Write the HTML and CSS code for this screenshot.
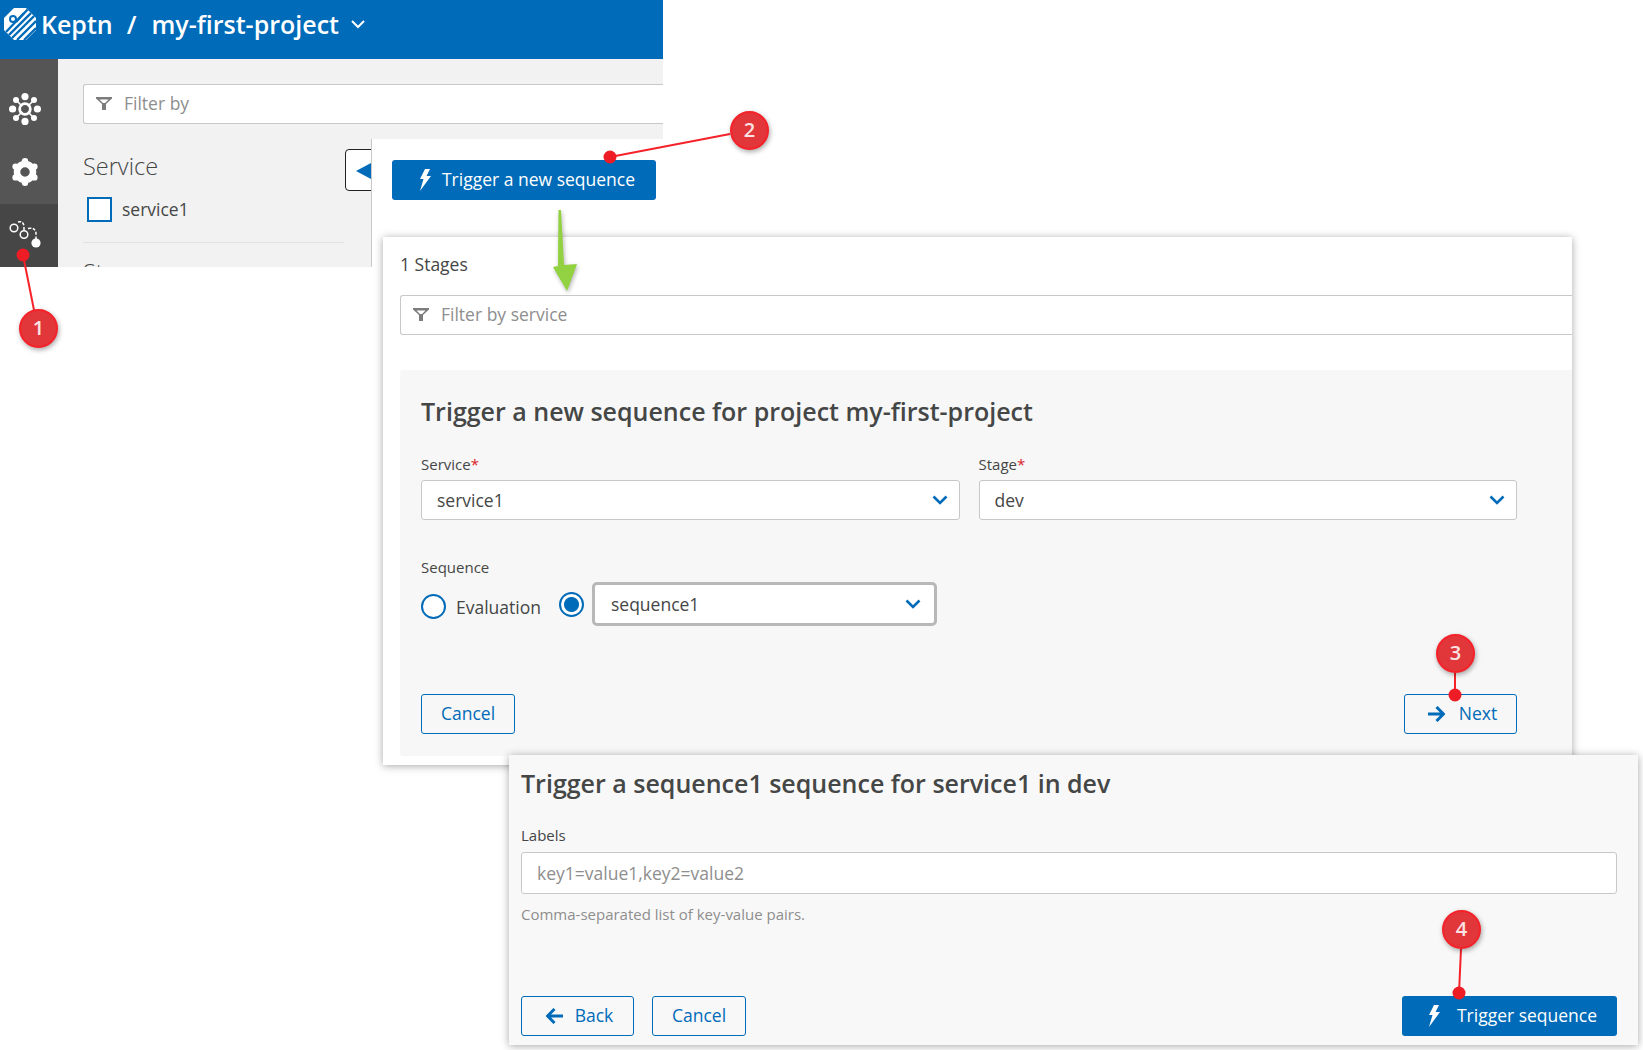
FILE: index.html
```html
<!DOCTYPE html>
<html lang="en">
<head>
    <meta charset="UTF-8">
    <meta name="viewport" content="width=device-width, initial-scale=1.0">
    <title>Keptn - Trigger a new sequence</title>
    <link rel="stylesheet" href="styles.css">
</head>
<body>
    <!-- screenshot 1: project view -->
    <div class="shot shot-project">
        <header class="topbar">
            <svg class="logo" viewBox="0 0 32 32" width="32" height="32">
                <defs><clipPath id="logoShape"><path d="M10 0 L22 0 L32 10 L32 22 L22 32 L10 32 L0 22 L0 10 Z"/></clipPath></defs>
                <g clip-path="url(#logoShape)">
                    <rect width="32" height="32" fill="#fff"/>
                    <g stroke="#006bb8" stroke-width="2.3">
                        <path d="M12 14 L25 0"/>
                        <path d="M0 32 L32 0"/>
                        <path d="M6 32 L32 6"/>
                        <path d="M13 32 L32 13"/>
                        <path d="M20 32 L32 20"/>
                        <path d="M2 24 L20 5"/>
                    </g>
                </g>
                <circle cx="9" cy="11" r="3" fill="none" stroke="#006bb8" stroke-width="2"/>
            </svg>
            <span class="brand">Keptn</span>
            <span class="slash">/</span>
            <span class="project">my-first-project</span>
            <svg class="project-caret" viewBox="0 0 16 10" width="16" height="10"><path d="M2 2 L8 8 L14 2" fill="none" stroke="#fff" stroke-width="2"/></svg>
        </header>
        <div class="project-body">
            <nav class="sidenav">
                <div class="nav-item nav-services">
                    <svg viewBox="0 0 32 32" width="32" height="32" fill="#fff">
                        <circle cx="16" cy="16" r="5.2" fill="none" stroke="#fff" stroke-width="3"/>
                        <path d="M7 7 L25 25 M25 7 L7 25" stroke="#fff" stroke-width="1.6"/>
                        <circle cx="16" cy="16" r="3.7" fill="#555"/>
                        <circle cx="16" cy="3.6" r="3.6"/><circle cx="16" cy="28.4" r="3.6"/>
                        <circle cx="3.6" cy="16" r="3.6"/><circle cx="28.4" cy="16" r="3.6"/>
                        <circle cx="7" cy="7" r="3"/><circle cx="25" cy="7" r="3"/>
                        <circle cx="7" cy="25" r="3"/><circle cx="25" cy="25" r="3"/>
                    </svg>
                </div>
                <div class="nav-item nav-settings">
                    <svg viewBox="0 0 28 28" width="28" height="28">
                        <circle cx="14" cy="14" r="8" fill="none" stroke="#fff" stroke-width="6.5"/>
                        <g fill="#fff">
                            <circle cx="14" cy="3.2" r="3.2"/><circle cx="14" cy="24.8" r="3.2"/>
                            <circle cx="4.6" cy="8.6" r="3.2"/><circle cx="23.4" cy="8.6" r="3.2"/>
                            <circle cx="4.6" cy="19.4" r="3.2"/><circle cx="23.4" cy="19.4" r="3.2"/>
                        </g>
                    </svg>
                </div>
                <div class="nav-item nav-sequences">
                    <svg viewBox="0 0 32 27" width="32" height="27">
                        <g fill="none" stroke="#fff" stroke-width="1.5">
                            <circle cx="5" cy="7" r="3.8"/>
                            <circle cx="15" cy="13.5" r="3.8"/>
                            <path d="M9 1 Q14 -0.5 15 5 L15 9" stroke-dasharray="3 1.6"/>
                            <path d="M19 7.5 Q26 6 27 12 L27 18" stroke-dasharray="3 1.6"/>
                        </g>
                        <circle cx="27" cy="22" r="4.6" fill="#fff"/>
                    </svg>
                </div>
            </nav>
            <div class="project-main">
                <div class="filter filter-project">
                    <svg class="funnel" viewBox="0 0 16 16" width="16" height="16"><path d="M0 2 H16 V3.5 L10 9 V15 H6 V9 L0 3.5 Z M3.5 4.5 L7 8 H9 L12.5 4.5 Z" fill-rule="evenodd"/></svg>
                    <span>Filter by</span>
                </div>
                <div class="facets">
                    <h3 class="facet-title">Service</h3>
                    <label class="facet-option"><span class="checkbox"></span>service1</label>
                    <hr class="facet-rule">
                    <h3 class="facet-title facet-clipped">Stage</h3>
                </div>
            </div>
        </div>
        <div class="collapse-btn"><span class="collapse-arrow"></span></div>
    </div>

    <!-- screenshot 2: sequence view top -->
    <div class="shot shot-sequences">
        <button class="btn btn-primary btn-new">
            <svg class="bolt" viewBox="0 0 12 22" width="12" height="22"><path d="M6 0 L11 0 L7.5 7 L12 7 L1 22 L4.5 10 L1 10 Z" fill="#fff"/></svg>
            Trigger a new sequence
        </button>
    </div>

    <!-- screenshot 3: trigger form -->
    <div class="shot shot-form">
        <p class="stage-count">1 Stages</p>
        <div class="filter filter-service">
            <svg class="funnel" viewBox="0 0 16 16" width="16" height="16"><path d="M0 2 H16 V3.5 L10 9 V15 H6 V9 L0 3.5 Z M3.5 4.5 L7 8 H9 L12.5 4.5 Z" fill-rule="evenodd"/></svg>
            <span>Filter by service</span>
        </div>
        <div class="form-panel">
            <h2 class="form-title">Trigger a new sequence for project my-first-project</h2>
            <div class="form-row">
                <div class="field">
                    <div class="field-label">Service<span class="req">*</span></div>
                    <div class="select"><span>service1</span>
                        <svg viewBox="0 0 16 10" width="16" height="10"><path d="M1.5 1.5 L8 8 L14.5 1.5" fill="none" stroke="#006bb8" stroke-width="2.6"/></svg>
                    </div>
                </div>
                <div class="field">
                    <div class="field-label">Stage<span class="req">*</span></div>
                    <div class="select"><span>dev</span>
                        <svg viewBox="0 0 16 10" width="16" height="10"><path d="M1.5 1.5 L8 8 L14.5 1.5" fill="none" stroke="#006bb8" stroke-width="2.6"/></svg>
                    </div>
                </div>
            </div>
            <div class="field-label label-sequence">Sequence</div>
            <div class="sequence-row">
                <span class="radio"></span>
                <span class="radio-label">Evaluation</span>
                <span class="radio radio-on"></span>
                <div class="select select-focus"><span>sequence1</span>
                    <svg viewBox="0 0 16 10" width="16" height="10"><path d="M1.5 1.5 L8 8 L14.5 1.5" fill="none" stroke="#006bb8" stroke-width="2.6"/></svg>
                </div>
            </div>
            <div class="form-actions">
                <button class="btn btn-outline btn-cancel">Cancel</button>
                <button class="btn btn-outline btn-next">
                    <svg viewBox="0 0 17 16" width="17" height="16"><path d="M0 8 H15 M8.5 1 L15.5 8 L8.5 15" fill="none" stroke="#006bb8" stroke-width="3"/></svg>
                    Next
                </button>
            </div>
        </div>
    </div>

    <!-- screenshot 4: labels step -->
    <div class="shot shot-labels">
        <h2 class="form-title labels-title">Trigger a sequence1 sequence for service1 in dev</h2>
        <div class="field-label">Labels</div>
        <div class="text-input">key1=value1,key2=value2</div>
        <p class="hint">Comma-separated list of key-value pairs.</p>
        <div class="form-actions labels-actions">
            <div class="actions-left">
                <button class="btn btn-outline btn-back">
                    <svg viewBox="0 0 17 16" width="17" height="16"><path d="M17 8 H2 M8.5 1 L1.5 8 L8.5 15" fill="none" stroke="#006bb8" stroke-width="3"/></svg>
                    Back
                </button>
                <button class="btn btn-outline btn-cancel">Cancel</button>
            </div>
            <button class="btn btn-primary btn-trigger">
                <svg class="bolt" viewBox="0 0 12 22" width="12" height="22"><path d="M6 0 L11 0 L7.5 7 L12 7 L1 22 L4.5 10 L1 10 Z" fill="#fff"/></svg>
                Trigger sequence
            </button>
        </div>
    </div>

    <!-- red callouts and green arrow drawn over the screenshots -->
    <svg class="callout-lines" viewBox="0 0 1643 1050" width="1643" height="1050">
        <g stroke="#f5222a" stroke-width="2" fill="none">
            <path d="M23 255 L34 310"/>
            <path d="M610 157 L730 134"/>
            <path d="M1455 695 L1455 673"/>
            <path d="M1459 993 L1461 949"/>
        </g>
        <g fill="#ee1c25">
            <circle cx="23" cy="255" r="6.5"/>
            <circle cx="610" cy="157" r="6.5"/>
            <circle cx="1455" cy="695" r="6.5"/>
            <circle cx="1459" cy="993" r="6.5"/>
        </g>
        <path class="green-arrow" d="M558.5 210 L561 210 L564 265 L577 264 L567 291 L553 267 L558 266 Z"/>
    </svg>
    <div class="badge badge-1">1</div>
    <div class="badge badge-2">2</div>
    <div class="badge badge-3">3</div>
    <div class="badge badge-4">4</div>
</body>
</html>
```

FILE: styles.css
```css
html, body {
    margin: 0;
    padding: 0;
}

body {
    position: relative;
    width: 1643px;
    height: 1050px;
    overflow: hidden;
    background-color: #ffffff;
    font-family: "Open Sans", "Noto Sans", sans-serif;
    color: #454646;
}

.shot {
    position: absolute;
    box-sizing: border-box;
}

/* project view */
.shot-project {
    left: 0;
    top: 0;
    width: 663px;
    height: 267px;
    overflow: hidden;
    background-color: #f2f2f2;
}

.topbar {
    height: 59px;
    box-sizing: border-box;
    display: flex;
    align-items: center;
    padding: 0 0 11px 4px;
    background-color: #006bb8;
    color: #ffffff;
    font-size: 25px;
    font-weight: 600;
}

.logo {
    margin-right: 5px;
}

.brand {
    margin-right: 14px;
}

.slash {
    margin-right: 15px;
}

.project-caret {
    margin-left: 11px;
}

.project-body {
    display: flex;
    height: 208px;
}

.sidenav {
    width: 58px;
    flex-shrink: 0;
    display: flex;
    flex-direction: column;
    background-color: #555555;
}

.nav-item {
    display: flex;
    justify-content: center;
    padding-right: 8px;
}

.nav-services {
    padding-top: 34px;
}

.nav-settings {
    padding-top: 33px;
    padding-bottom: 18px;
}

.nav-sequences {
    flex: 1;
    padding-top: 17px;
    background-color: #464646;
}

.project-main {
    flex: 1;
    padding: 25px 0 0 25px;
}

.filter {
    display: flex;
    align-items: center;
    box-sizing: border-box;
    height: 40px;
    padding: 0 0 2px 12px;
    background-color: #ffffff;
    border: 1px solid #c8c8c8;
    border-right: none;
    border-radius: 3px 0 0 3px;
    color: #8e8e8e;
    font-size: 17.5px;
}

.funnel {
    fill: #7c7c7c;
    margin-right: 12px;
}

.facets {
    width: 261px;
    padding-top: 26px;
}

.facet-title {
    margin: 0;
    font-size: 23.5px;
    font-weight: 300;
    line-height: 32px;
    color: #454646;
}

.facet-option {
    display: flex;
    align-items: center;
    margin-top: 15px;
    padding-left: 4px;
    font-size: 17.5px;
    line-height: 25px;
}

.checkbox {
    box-sizing: border-box;
    width: 25px;
    height: 25px;
    margin-right: 10px;
    background-color: #ffffff;
    border: 2px solid #006bb8;
}

.facet-rule {
    margin: 20px 0 0;
    border: none;
    border-top: 1px solid #e2e2e2;
}

.facet-clipped {
    margin-top: 13px;
}

.collapse-btn {
    position: absolute;
    left: 345px;
    top: 149px;
    width: 40px;
    height: 42px;
    box-sizing: border-box;
    background-color: #ffffff;
    border: 1px solid #222222;
    border-radius: 4px;
}

.collapse-arrow {
    position: absolute;
    left: 10px;
    top: 13px;
    border-top: 8px solid transparent;
    border-bottom: 8px solid transparent;
    border-right: 15px solid #006bb8;
}

/* sequence view */
.shot-sequences {
    left: 371px;
    top: 139px;
    width: 292px;
    height: 128px;
    padding: 21px 0 0 20px;
    background-color: #ffffff;
    border-left: 1px solid #c8c8c8;
}

.btn {
    display: inline-flex;
    align-items: center;
    justify-content: center;
    box-sizing: border-box;
    height: 40px;
    padding: 0 0 2px;
    border-radius: 3px;
    font-family: inherit;
    font-size: 17.5px;
    cursor: pointer;
}

.btn-primary {
    background-color: #006bb8;
    border: none;
    color: #ffffff;
    padding-left: 6px;
}

.btn-outline {
    background-color: transparent;
    border: 1px solid #006bb8;
    color: #006bb8;
}

.btn svg {
    flex-shrink: 0;
}

.bolt {
    margin-right: 11px;
    margin-top: 2px;
}

.btn-new {
    width: 264px;
}

.btn-cancel {
    width: 94px;
}

.btn-next {
    width: 113px;
    padding-left: 4px;
}

.btn-next svg,
.btn-back svg {
    margin-right: 14px;
    margin-top: 2px;
}

.btn-back {
    width: 113px;
    padding-left: 4px;
}

.btn-back svg {
    margin-right: 12px;
}

.btn-trigger {
    width: 215px;
}

.btn-trigger .bolt {
    margin-right: 17px;
}

/* trigger form */
.shot-form {
    left: 383px;
    top: 237px;
    width: 1189px;
    height: 528px;
    padding: 15px 0 0 17px;
    background-color: #ffffff;
    box-shadow: 0 1px 8px rgba(0, 0, 0, 0.35);
}

.stage-count {
    margin: 0;
    font-size: 17.5px;
    line-height: 25px;
}

.filter-service {
    margin-top: 18px;
    height: 40px;
}

.form-panel {
    margin-top: 35px;
    height: 386px;
    box-sizing: border-box;
    padding: 24px 55px 0 21px;
    background-color: #f7f7f7;
    border-radius: 3px 0 0 3px;
}

.form-title {
    margin: 0;
    font-size: 25px;
    font-weight: 600;
    line-height: 34px;
    color: #454646;
}

.form-row {
    display: flex;
    gap: 19px;
    margin-top: 26px;
}

.field {
    flex: 1;
}

.field-label {
    font-size: 15px;
    line-height: 20px;
    margin-bottom: 6px;
}

.req {
    color: #d8232a;
}

.select {
    display: flex;
    align-items: center;
    justify-content: space-between;
    box-sizing: border-box;
    height: 40px;
    padding: 0 11px 0 15px;
    background-color: #ffffff;
    border: 1px solid #c8c8c8;
    border-radius: 3px;
    font-size: 17.5px;
}

.label-sequence {
    margin-top: 37px;
    margin-bottom: 10px;
}

.sequence-row {
    display: flex;
    align-items: center;
}

.radio {
    box-sizing: border-box;
    width: 25px;
    height: 25px;
    background-color: #ffffff;
    border: 2px solid #006bb8;
    border-radius: 50%;
}

.radio-on {
    margin-top: -4px;
    background: radial-gradient(circle, #006bb8 0, #006bb8 7px, #ffffff 8px);
}

.radio-label {
    margin: 0 18px 0 10px;
    font-size: 17.5px;
}

.select-focus {
    width: 345px;
    height: 44px;
    margin-left: 8px;
    margin-top: -5px;
    padding: 0 13px 0 16px;
    border: 3px solid #b8b8b8;
    border-radius: 5px;
}

.form-actions {
    display: flex;
    justify-content: space-between;
    margin-top: 68px;
}

/* labels step */
.shot-labels {
    left: 509px;
    top: 755px;
    width: 1129px;
    height: 290px;
    padding: 11px 21px 0 12px;
    background-color: #f8f8f8;
    box-shadow: 0 1px 8px rgba(0, 0, 0, 0.35);
}

.shot-labels .field-label {
    margin-top: 25px;
    margin-bottom: 7px;
}

.text-input {
    box-sizing: border-box;
    height: 42px;
    padding-left: 15px;
    line-height: 40px;
    background-color: #ffffff;
    border: 1px solid #c8c8c8;
    border-radius: 3px;
    color: #8e8e8e;
    font-size: 17.5px;
}

.hint {
    margin: 10px 0 0;
    font-size: 15px;
    line-height: 20px;
    color: #8e8e8e;
}

.labels-actions {
    margin-top: 72px;
}

.actions-left {
    display: flex;
    gap: 18px;
}

/* callouts */
.callout-lines {
    position: absolute;
    left: 0;
    top: 0;
}

.green-arrow {
    fill: #92d13f;
    filter: drop-shadow(1px 2px 2px rgba(0, 0, 0, 0.3));
}

.badge {
    position: absolute;
    box-sizing: border-box;
    width: 39px;
    height: 39px;
    line-height: 34px;
    text-align: center;
    background-color: #e1373b;
    border: 2px solid #f5222a;
    border-radius: 50%;
    box-shadow: 1px 2px 5px rgba(0, 0, 0, 0.35);
    color: #fbe3e3;
    font-size: 20px;
    font-weight: 600;
}

.badge-1 {
    left: 19px;
    top: 309px;
}

.badge-2 {
    left: 730px;
    top: 111px;
}

.badge-3 {
    left: 1436px;
    top: 634px;
}

.badge-4 {
    left: 1442px;
    top: 910px;
}
```
